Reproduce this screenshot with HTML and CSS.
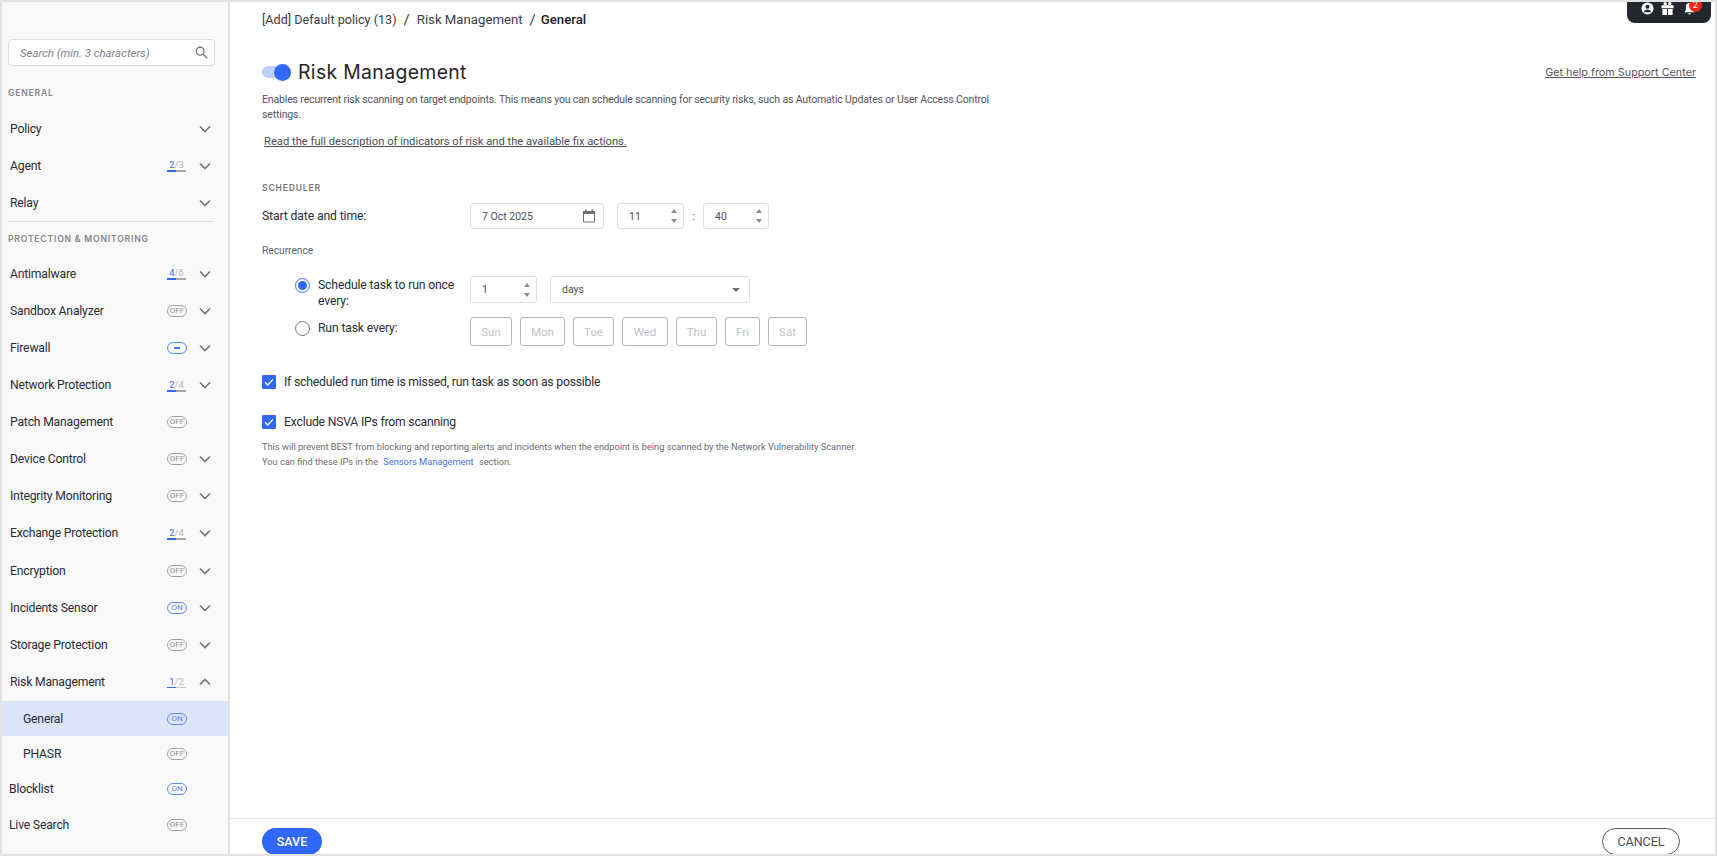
FILE: index.html
```html
<!DOCTYPE html>
<html lang="en">
<head>
<meta charset="utf-8">
<title>Risk Management</title>
<link rel="stylesheet" href="styles.css">
</head>
<body>
<div class="frame">
  <aside class="sidebar">
    <div class="search"><span class="search-text">Search (min. 3 characters)</span>
      <svg class="search-icon" viewBox="0 0 14 14"><circle cx="5.6" cy="5.6" r="4.2"/><path d="M8.8 8.8L13 13"/></svg>
    </div>
    <div class="group-title first">GENERAL</div>
    <div class="row"><span class="label">Policy</span><svg class="chev" viewBox="0 0 12 8"><path d="M1 1.5l5 5 5-5"/></svg></div>
    <div class="row"><span class="label">Agent</span><span class="prog"><span class="nums"><b>2</b>/3</span><span class="track"><i class="w67"></i></span></span><svg class="chev" viewBox="0 0 12 8"><path d="M1 1.5l5 5 5-5"/></svg></div>
    <div class="row"><span class="label">Relay</span><svg class="chev" viewBox="0 0 12 8"><path d="M1 1.5l5 5 5-5"/></svg></div>
    <div class="divider"></div>
    <div class="group-title">PROTECTION &amp; MONITORING</div>
    <div class="row gap"><span class="label">Antimalware</span><span class="prog"><span class="nums"><b>4</b>/6</span><span class="track"><i class="w67"></i></span></span><svg class="chev" viewBox="0 0 12 8"><path d="M1 1.5l5 5 5-5"/></svg></div>
    <div class="row"><span class="label">Sandbox Analyzer</span><span class="pill">OFF</span><svg class="chev" viewBox="0 0 12 8"><path d="M1 1.5l5 5 5-5"/></svg></div>
    <div class="row"><span class="label">Firewall</span><span class="pill on dash"><i></i></span><svg class="chev" viewBox="0 0 12 8"><path d="M1 1.5l5 5 5-5"/></svg></div>
    <div class="row"><span class="label">Network Protection</span><span class="prog"><span class="nums"><b>2</b>/4</span><span class="track"><i class="w50"></i></span></span><svg class="chev" viewBox="0 0 12 8"><path d="M1 1.5l5 5 5-5"/></svg></div>
    <div class="row"><span class="label">Patch Management</span><span class="pill">OFF</span></div>
    <div class="row"><span class="label">Device Control</span><span class="pill">OFF</span><svg class="chev" viewBox="0 0 12 8"><path d="M1 1.5l5 5 5-5"/></svg></div>
    <div class="row"><span class="label">Integrity Monitoring</span><span class="pill">OFF</span><svg class="chev" viewBox="0 0 12 8"><path d="M1 1.5l5 5 5-5"/></svg></div>
    <div class="row"><span class="label">Exchange Protection</span><span class="prog"><span class="nums"><b>2</b>/4</span><span class="track"><i class="w50"></i></span></span><svg class="chev" viewBox="0 0 12 8"><path d="M1 1.5l5 5 5-5"/></svg></div>
    <div class="row"><span class="label">Encryption</span><span class="pill">OFF</span><svg class="chev" viewBox="0 0 12 8"><path d="M1 1.5l5 5 5-5"/></svg></div>
    <div class="row"><span class="label">Incidents Sensor</span><span class="pill on">ON</span><svg class="chev" viewBox="0 0 12 8"><path d="M1 1.5l5 5 5-5"/></svg></div>
    <div class="row"><span class="label">Storage Protection</span><span class="pill">OFF</span><svg class="chev" viewBox="0 0 12 8"><path d="M1 1.5l5 5 5-5"/></svg></div>
    <div class="row"><span class="label">Risk Management</span><span class="prog"><span class="nums"><b>1</b>/2</span><span class="track thin"><i class="w50"></i></span></span><svg class="chev" viewBox="0 0 12 8"><path d="M1 6.5l5-5 5 5"/></svg></div>
    <div class="row sub active"><span class="label">General</span><span class="pill on">ON</span></div>
    <div class="row sub"><span class="label">PHASR</span><span class="pill">OFF</span></div>
    <div class="row short"><span class="label">Blocklist</span><span class="pill on">ON</span></div>
    <div class="row short"><span class="label">Live Search</span><span class="pill">OFF</span></div>
  </aside>

  <main class="main">
    <div class="content">
      <nav class="crumbs"><span class="crumb-root">[Add] Default policy (13)</span><span class="sep">/</span><span>Risk Management</span><span class="sep">/</span><span class="current">General</span></nav>

      <div class="title-row">
        <span class="toggle"><span class="knob"></span></span>
        <h1>Risk Management</h1>
        <a class="help">Get help from Support Center</a>
      </div>
      <p class="desc">Enables recurrent risk scanning on target endpoints. This means you can schedule scanning for security risks, such as Automatic Updates or User Access Control settings.</p>
      <a class="read">Read the full description of indicators of risk and the available fix actions.</a>

      <h2 class="section">SCHEDULER</h2>
      <div class="start-row">
        <span class="start-label">Start date and time:</span>
        <div class="field date"><span>7 Oct 2025</span>
          <svg class="cal" viewBox="0 0 14 14"><path d="M1.5 2.5h11v10.500h-11z"/><path class="fill" d="M1 2h12v3H1zM3 .5h1.600V2H3zM9.400.5H11V2H9.400z"/></svg>
        </div>
        <div class="field num hour"><span>11</span><span class="spin"><i class="up"></i><i class="down"></i></span></div>
        <span class="colon">:</span>
        <div class="field num minute"><span>40</span><span class="spin"><i class="up"></i><i class="down"></i></span></div>
      </div>
      <div class="recurrence">Recurrence</div>

      <div class="rec-row once">
        <span class="radio checked"></span>
        <span class="rec-label">Schedule task to run once every:</span>
        <div class="field num every"><span>1</span><span class="spin"><i class="up"></i><i class="down"></i></span></div>
        <div class="field select"><span>days</span><i class="caret"></i></div>
      </div>
      <div class="rec-row task">
        <span class="radio"></span>
        <span class="rec-label">Run task every:</span>
        <div class="days">
          <span class="day d42">Sun</span><span class="day d45">Mon</span><span class="day d41">Tue</span><span class="day d46">Wed</span><span class="day d41">Thu</span><span class="day d35">Fri</span><span class="day d39">Sat</span>
        </div>
      </div>

      <label class="check first-check"><span class="box"><svg viewBox="0 0 14 14"><path d="M3 7.200l2.800 2.800L11 4.400"/></svg></span>If scheduled run time is missed, run task as soon as possible</label>
      <label class="check second-check"><span class="box"><svg viewBox="0 0 14 14"><path d="M3 7.200l2.800 2.800L11 4.400"/></svg></span>Exclude NSVA IPs from scanning</label>
      <p class="note">This will prevent BEST from blocking and reporting alerts and incidents when the endpoint is being scanned by the Network Vulnerability Scanner.<br>You can find these IPs in the <a class="inline-link">Sensors Management</a> section.</p>
    </div>
    <footer class="footer">
      <button class="btn save">SAVE</button>
      <button class="btn cancel">CANCEL</button>
    </footer>
  </main>

  <div class="topbar">
    <svg class="tb-icon" viewBox="0 0 14 14"><circle cx="7" cy="7" r="6.500" fill="#fff"/><circle cx="7" cy="5.200" r="2.200" fill="#22262e"/><path d="M3 11c.6-2.200 2.200-3 4-3s3.400.8 4 3z" fill="#22262e"/></svg>
    <svg class="tb-icon" viewBox="0 0 14 14"><path fill="#fff" d="M.5 3.500h13v3.300H.5zM1.500 7.600h5V14h-5zM7.500 7.600h5V14h-5z"/><circle cx="4.500" cy="1.800" r="1.800" fill="#fff"/><circle cx="9.500" cy="1.800" r="1.800" fill="#fff"/></svg>
    <span class="bell">
      <svg class="tb-icon" viewBox="0 0 14 14"><path fill="#fff" d="M7 1a4 4 0 0 0-4 4v4l-1.500 2h11L11 9V5a4 4 0 0 0-4-4zM5.500 12h3a1.500 1.500 0 0 1-3 0z"/></svg>
      <span class="badge">2</span>
    </span>
  </div>
</div>
</body>
</html>
```

FILE: styles.css
```css
* { box-sizing: border-box; }
html, body { margin: 0; height: 100%; }
body { background: #fff; font-family: Roboto, "Noto Sans", "Liberation Sans", sans-serif; color: #2a2d36; overflow: hidden; }

.frame { position: relative; display: flex; width: 1717px; height: 856px; border: 2px solid #e2e2e2; overflow: hidden; }

/* Sidebar */
.sidebar { width: 228px; flex: none; background: #f9f9f9; border-right: 2px solid #e2e2e2; padding-top: 37px; font-size: 12.200px; }
.search { position: relative; height: 27px; width: 207px; margin-left: 6px; background: #fff; border: 1px solid #dedede; border-radius: 4px; padding: 0 11px; display: flex; align-items: center; justify-content: space-between; }
.search-text { font-size: 11.400px; font-style: italic; color: #80828a; }
.search-icon { width: 13px; height: 13px; margin-right: -5px; fill: none; stroke: #73757c; stroke-width: 1.500; }
.group-title { margin: 0 0 0 6px; font-family: Inter, "Liberation Sans", sans-serif; font-size: 8.600px; font-weight: 600; letter-spacing: .8px; color: #84868c; line-height: 12px; white-space: nowrap; }
.group-title.first { margin-top: 21px; margin-bottom: 11px; }
.divider { width: 206px; margin: 0 0 11px 6px; border-top: 1px solid #dcdcdc; }
.row { display: flex; align-items: center; height: 37.100px; padding-left: 8px; position: relative; }
.row.gap { margin-top: 10px; }
.label { flex: 1; color: #2a2d36; white-space: nowrap; letter-spacing: -.2px; }
.chev { position: absolute; left: 197px; width: 12px; height: 8px; fill: none; stroke: #72747a; stroke-width: 1.600; }
.prog { position: absolute; left: 165px; width: 19px; display: flex; flex-direction: column; align-items: center; }
.nums { font-size: 9.500px; line-height: 11px; color: #b5b7bc; }
.nums b { font-weight: 400; color: #3f6cf5; }
.track { display: block; width: 19px; height: 2px; background: #a8a8a8; }
.track.thin { height: 1px; background: #c9c9c9; }
.track.thin i { height: 1px; }
.track i { display: block; height: 2px; background: #3268fa; }
.w67 { width: 9px; }
.w50 { width: 9px; }
.pill { position: absolute; left: 165px; width: 20px; height: 12px; border: 1px solid #a0a2a7; border-radius: 6px; font-size: 8px; line-height: 10px; text-align: center; color: #8d8f95; }
.pill.on { border-color: #5f88f8; color: #5e83e8; }
.pill.dash { display: flex; align-items: center; justify-content: center; }
.pill.dash i { display: block; width: 6px; height: 2px; background: #4a78f7; }
.row.sub { height: 35px; padding-left: 21px; }
.row.sub.active { background: #dbe4f8; margin-top: 1px; }
.row.short { height: 35.500px; padding-left: 7px; }

/* Main */
.main { flex: 1; min-width: 0; display: flex; flex-direction: column; }
.content { flex: 1; padding: 8px 19px 0 32px; position: relative; }
.crumbs { display: flex; align-items: center; font-size: 13.200px; line-height: 20px; color: #3b3d45; }
.crumbs .crumb-root { font-size: 12.600px; }
.crumbs .sep { margin: 0 7px; font-size: 15px; }
.crumbs .current { color: #1d1f26; font-weight: 500; margin-left: -2px; }

.title-row { display: flex; align-items: center; height: 26px; margin-top: 29px; }
.toggle { position: relative; width: 29px; height: 12px; border-radius: 6px; background: #c0cffb; flex: none; }
.knob { position: absolute; right: 0; top: -2.500px; width: 17px; height: 17px; border-radius: 50%; background: #3268fa; }
h1 { margin: 0 0 0 7px; font-size: 19.400px; font-weight: 400; font-family: Inter, "Liberation Sans", sans-serif; letter-spacing: .35px; color: #23252c; flex: 1; }
.help { font-size: 10.800px; color: #55575e; text-decoration: underline; font-family: Inter, sans-serif; }

.desc { width: 730px; margin: 7px 0 0; font-size: 10.500px; line-height: 15px; letter-spacing: -.15px; color: #53555c; }
.read { display: block; margin: 12px 0 0 2px; font-size: 11.200px; line-height: 16px; color: #4a4c53; text-decoration: underline; }

.section { margin: 32px 0 0; font-family: Inter, "Liberation Sans", sans-serif; font-size: 8.600px; line-height: 12px; font-weight: 600; letter-spacing: .8px; color: #74767c; }

.field { height: 26px; background: #fff; border: 1px solid #dedede; border-radius: 3px; display: flex; align-items: center; justify-content: space-between; font-size: 10.500px; color: #4c4e55; padding: 0 11px; flex: none; }
.start-row { display: flex; align-items: center; margin-top: 9px; }
.start-label { width: 208px; font-size: 12.200px; letter-spacing: -.12px; color: #2a2d36; }
.date { width: 134px; padding-right: 7px; }
.cal { width: 14px; height: 14px; fill: none; stroke: #6f7177; stroke-width: 1; }
.cal .fill { fill: #6f7177; stroke: none; }
.hour { width: 67px; margin-left: 13px; padding-right: 6px; }
.colon { width: 19px; text-align: center; font-size: 11px; color: #55575e; }
.minute { width: 66px; padding-right: 6px; }
.spin { display: flex; flex-direction: column; gap: 6px; }
.spin i { display: block; width: 0; height: 0; border-left: 3.500px solid transparent; border-right: 3.500px solid transparent; }
.spin .up { border-bottom: 4px solid #8a8c92; }
.spin .down { border-top: 4px solid #8a8c92; }
.recurrence { margin-top: 15px; font-size: 10.200px; line-height: 14px; color: #5d5f66; }

.rec-row { display: flex; align-items: flex-start; margin-left: 33px; }
.rec-row.once { margin-top: 19px; }
.rec-row.task { margin-top: 11px; }
.radio { width: 15px; height: 15px; border: 1px solid #77797f; border-radius: 50%; background: #fff; flex: none; position: relative; top: 1px; }
.radio.checked { border-color: #3f6cf5; }
.radio.checked::after { content: ""; display: block; width: 9px; height: 9px; margin: 2px; border-radius: 50%; background: #3268fa; }
.rec-label { width: 152px; margin-left: 8px; font-size: 12.200px; line-height: 16px; letter-spacing: -.15px; color: #2a2d36; flex: none; }
.every { width: 67px; height: 27px; padding-right: 6px; margin-top: -1px; }
.select { width: 200px; height: 27px; margin-left: 13px; padding-right: 9px; margin-top: -1px; }
.caret { width: 0; height: 0; border-left: 4px solid transparent; border-right: 4px solid transparent; border-top: 4px solid #6a6c72; }
.days { display: flex; gap: 8px; margin-top: -3px; }
.day { height: 29px; border: 1px solid #b5b5b5; border-radius: 3px; background: #fff; font-size: 11.500px; color: #c0c2c6; display: flex; align-items: center; justify-content: center; }
.d42 { width: 42px; } .d45 { width: 45px; } .d41 { width: 41px; } .d46 { width: 46px; } .d35 { width: 35px; } .d39 { width: 39px; }

.check { display: flex; align-items: center; font-size: 12.200px; line-height: 16px; letter-spacing: -.2px; color: #2a2d36; }
.first-check { margin-top: 28px; }
.second-check { margin-top: 24px; }
.box { width: 14px; height: 14px; background: #3268fa; border-radius: 1px; margin-right: 8px; flex: none; }
.box svg { display: block; width: 14px; height: 14px; fill: none; stroke: #fff; stroke-width: 1.300; }
.note { margin: 10px 0 0; font-size: 9.260px; line-height: 14.500px; color: #6b6d73; }
.inline-link { color: #4a6ff0; margin: 0 3px; }

.footer { height: 36px; flex: none; border-top: 1px solid #e2e2e2; padding: 9px 35px 0 32px; display: flex; justify-content: space-between; }
.btn { height: 27px; border-radius: 14px; font-family: inherit; font-size: 12.500px; padding: 0; }
.save { width: 60px; background: #3268fa; color: #fff; border: 0; font-weight: 500; }
.cancel { width: 78px; background: #fff; color: #4a4c53; border: 1px solid #55575e; }

/* Dark panel hanging from the top edge */
.topbar { position: absolute; right: 4px; top: 0; width: 84px; height: 21px; background: #22262e; border-radius: 0 0 8px 8px; display: flex; align-items: flex-start; gap: 7px; padding-left: 14px; }
.tb-icon { display: block; width: 13px; height: 13px; }
.bell { position: relative; display: block; margin-left: 2px; }
.badge { position: absolute; left: 6px; top: -3px; width: 13px; height: 13px; border-radius: 50%; background: #f0261c; color: #fff; font-size: 8.500px; line-height: 13px; text-align: center; }
```
